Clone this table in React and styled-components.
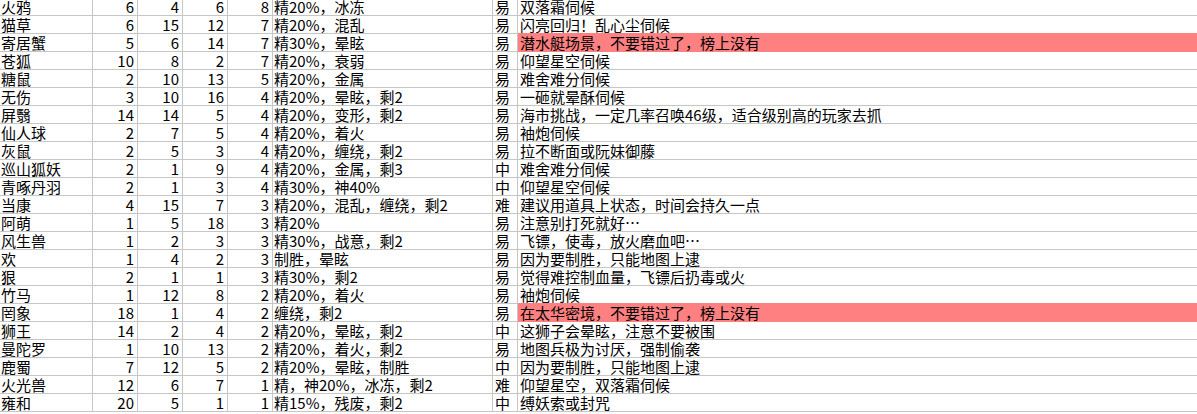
import React from 'react';
import styled, { createGlobalStyle } from 'styled-components';

// ------------------- Styled Components -------------------
const GlobalStyle = createGlobalStyle`
  html, body {
    margin: 0;
    padding: 0;
    background: #fff;
    overflow: hidden;
  }
  * {
    box-sizing: border-box;
  }
`;

const Sheet = styled.div`
  display: grid;
  grid-template-columns: 93px 45px 45px 45px 45px 220px 25px 1fr;
  grid-auto-rows: 18px;
  margin-top: -2px;
  width: 1197px;
  font-family: "Noto Sans CJK SC", "Liberation Sans", sans-serif;
  font-size: 15px;
  color: #000;
`;

const Cell = styled.div`
  display: flex;
  align-items: center;
  justify-content: ${p => (p.$num ? 'flex-end' : 'flex-start')};
  padding: ${p => (p.$num ? '0 3px 0 0' : `0 0 0 ${p.$pad || 1}px`)};
  border-right: ${p => (p.$last ? 'none' : '1px solid #c6c6c6')};
  border-bottom: 1px solid ${p => (p.$hot ? '#ff8080' : '#c6c6c6')};
  background: ${p => (p.$hot ? '#ff8080' : 'transparent')};
  box-shadow: ${p => (p.$hot ? '0 -1px 0 #ff8080' : 'none')};
  line-height: 17px;
  white-space: nowrap;
  overflow: visible;
`;
// -----------------------------------------------------------

const rows = [
  ['火鸦', 6, 4, 6, 8, '精20%，冰冻', '易', '双落霜伺候'],
  ['猫草', 6, 15, 12, 7, '精20%，混乱', '易', '闪亮回归！乱心尘伺候'],
  ['寄居蟹', 5, 6, 14, 7, '精30%，晕眩', '易', '潜水艇场景，不要错过了，榜上没有', true],
  ['苍狐', 10, 8, 2, 7, '精20%，衰弱', '易', '仰望星空伺候'],
  ['糖鼠', 2, 10, 13, 5, '精20%，金属', '易', '难舍难分伺候'],
  ['无伤', 3, 10, 16, 4, '精20%，晕眩，剩2', '易', '一砸就晕酥伺候'],
  ['屏翳', 14, 14, 5, 4, '精20%，变形，剩2', '易', '海市挑战，一定几率召唤46级，适合级别高的玩家去抓'],
  ['仙人球', 2, 7, 5, 4, '精20%，着火', '易', '袖炮伺候'],
  ['灰鼠', 2, 5, 3, 4, '精20%，缠绕，剩2', '易', '拉不断面或阮妹御藤'],
  ['巡山狐妖', 2, 1, 9, 4, '精20%，金属，剩3', '中', '难舍难分伺候'],
  ['青啄丹羽', 2, 1, 3, 4, '精30%，神40%', '中', '仰望星空伺候'],
  ['当康', 4, 15, 7, 3, '精20%，混乱，缠绕，剩2', '难', '建议用道具上状态，时间会持久一点'],
  ['阿萌', 1, 5, 18, 3, '精20%', '易', '注意别打死就好…'],
  ['风生兽', 1, 2, 3, 3, '精30%，战意，剩2', '易', '飞镖，使毒，放火磨血吧…'],
  ['欢', 1, 4, 2, 3, '制胜，晕眩', '易', '因为要制胜，只能地图上逮'],
  ['狠', 2, 1, 1, 3, '精30%，剩2', '易', '觉得难控制血量，飞镖后扔毒或火'],
  ['竹马', 1, 12, 8, 2, '精20%，着火', '易', '袖炮伺候'],
  ['罔象', 18, 1, 4, 2, '缠绕，剩2', '易', '在太华密境，不要错过了，榜上没有', true],
  ['狮王', 14, 2, 4, 2, '精20%，晕眩，剩2', '中', '这狮子会晕眩，注意不要被围'],
  ['曼陀罗', 1, 10, 13, 2, '精20%，着火，剩2', '易', '地图兵极为讨厌，强制偷袭'],
  ['鹿蜀', 7, 12, 5, 2, '精20%，晕眩，制胜', '中', '因为要制胜，只能地图上逮'],
  ['火光兽', 12, 6, 7, 1, '精，神20%，冰冻，剩2', '难', '仰望星空，双落霜伺候'],
  ['雍和', 20, 5, 1, 1, '精15%，残废，剩2', '中', '缚妖索或封咒'],
];

const App = () => (
  <>
    <GlobalStyle />
    <Sheet>
      {rows.map(([name, a, b, c, d, effect, level, note, hot], i) => (
        <React.Fragment key={i}>
          <Cell $pad={0}>{name}</Cell>
          <Cell $num>{a}</Cell>
          <Cell $num>{b}</Cell>
          <Cell $num>{c}</Cell>
          <Cell $num>{d}</Cell>
          <Cell>{effect}</Cell>
          <Cell $pad={2}>{level}</Cell>
          <Cell $pad={2} $last $hot={hot}>{note}</Cell>
        </React.Fragment>
      ))}
    </Sheet>
  </>
);

export default App;
